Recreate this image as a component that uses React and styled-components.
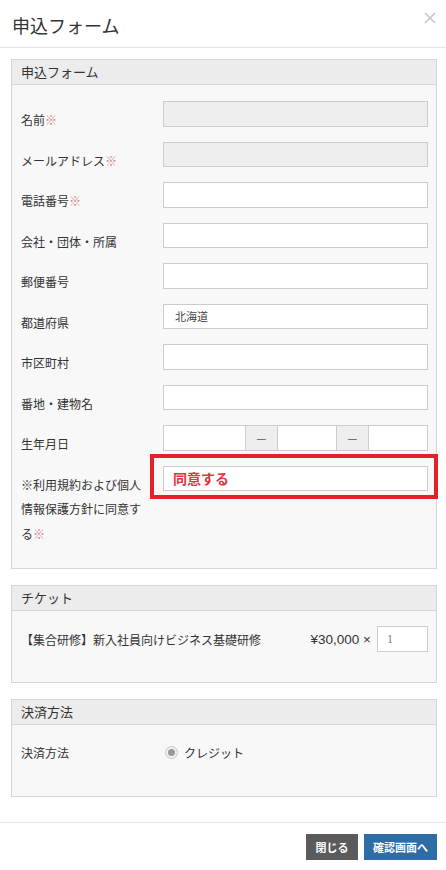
import React from 'react';
import styled, { createGlobalStyle } from 'styled-components';

const GlobalStyle = createGlobalStyle`
  body {
    margin: 0;
    background: #fff;
    font-family: "Noto Sans CJK JP", "Noto Sans", sans-serif;
    color: #333;
  }
`;

const Modal = styled.div`
  width: 446px;
  background: #fff;
`;

const Header = styled.div`
  height: 48px;
  box-sizing: border-box;
  border-bottom: 1px solid #e5e5e5;
  display: flex;
  align-items: center;
  justify-content: space-between;
  padding: 0 10px 0 12px;
`;

const Title = styled.h4`
  margin: 0;
  font-size: 18px;
  font-weight: 400;
  line-height: 1;
  padding-top: 3px;
`;

const Close = styled.button`
  border: 0;
  background: none;
  padding: 0;
  margin-bottom: 12px;
  display: flex;
`;

const Body = styled.div`
  padding: 11px 9px 25px 11px;
  display: flex;
  flex-direction: column;
  gap: 16px;
`;

const Panel = styled.div`
  border: 1px solid #d6d6d6;
  background: #f8f8f8;
`;

const PanelHead = styled.div`
  height: 25px;
  box-sizing: border-box;
  background: #ececec;
  border-bottom: 1px solid #d6d6d6;
  padding: 0 9px;
  font-size: 13px;
  line-height: 24px;
`;

const PanelBody = styled.div`
  padding: ${p => p.$pad || '16px 8px 22px 9px'};
`;

const Row = styled.div`
  display: flex;
  align-items: flex-start;
  margin-bottom: 9px;
  &:last-child { margin-bottom: 0; }
`;

const Label = styled.div`
  width: 142px;
  flex: none;
  box-sizing: border-box;
  padding: 7px ${p => p.$pr || '0'} 0 0;
  font-size: 12px;
  line-height: 24.5px;
`;

const Req = styled.span`
  color: #d08080;
`;

const Field = styled.div`
  flex: 1;
  position: relative;
  display: flex;
`;

const Input = styled.div`
  flex: 1;
  height: 25.5px;
  box-sizing: border-box;
  border: 1px solid #cccccc;
  background: ${p => (p.$disabled ? '#eeeeee' : '#ffffff')};
  font-size: ${p => p.$big ? '14px' : '11px'};
  font-weight: ${p => p.$big ? 700 : 400};
  color: ${p => p.$red ? '#e23340' : '#444'};
  padding: 0 ${p => p.$big ? '9px' : '11px'};
  line-height: 23px;
`;

const Addon = styled.div`
  width: 31px;
  flex: none;
  height: 25.5px;
  box-sizing: border-box;
  border: 1px solid #cccccc;
  border-left: 0;
  border-right: 0;
  background: #eeeeee;
  display: flex;
  align-items: center;
  justify-content: center;
  font-size: 11px;
  color: #555;
`;

const DateInput = styled(Input)`
  flex: none;
  width: ${p => p.$w};
`;

const Highlight = styled.span`
  position: absolute;
  left: -13px;
  right: -10px;
  top: -12px;
  bottom: -8px;
  border: 4px solid #e3212b;
  pointer-events: none;
`;

const TicketRow = styled.div`
  display: flex;
  align-items: center;
  font-size: 12px;
`;

const TicketName = styled.div`
  flex: 1;
  padding-top: 2px;
`;

const Price = styled.div`
  font-family: "Liberation Sans", "Noto Sans CJK JP", sans-serif;
  font-size: 13.5px;
  margin-right: 6px;
  padding-top: 1px;
`;

const Qty = styled.div`
  width: 51px;
  height: 25.5px;
  box-sizing: border-box;
  border: 1px solid #cccccc;
  background: #fff;
  font-family: "Liberation Serif", serif;
  font-size: 12px;
  color: #777;
  padding: 0 9px;
  line-height: 25px;
`;

const RadioWrap = styled.div`
  display: flex;
  align-items: center;
  gap: 6px;
  font-size: 12px;
  padding-top: 7px;
  line-height: 24px;
  margin-left: 2px;
`;

const Radio = styled.span`
  width: 11px;
  height: 11px;
  border-radius: 50%;
  border: 1px solid #c8c8c8;
  background: #f0f0f0;
  display: flex;
  align-items: center;
  justify-content: center;
  &::after {
    content: '';
    width: 7px;
    height: 7px;
    border-radius: 50%;
    background: #999;
  }
`;

const Footer = styled.div`
  border-top: 1px solid #e5e5e5;
  padding: 11px 9px 9px;
  display: flex;
  justify-content: flex-end;
  gap: 6px;
`;

const Button = styled.button`
  height: 26px;
  border: 0;
  padding: 0;
  width: ${p => p.$w};
  background: ${p => p.$bg};
  color: #fff;
  font-family: "Noto Sans CJK JP", sans-serif;
  font-size: 11px;
  font-weight: 700;
`;

const fields = [
  { label: '名前', req: true, disabled: true },
  { label: 'メールアドレス', req: true, disabled: true },
  { label: '電話番号', req: true },
  { label: '会社・団体・所属' },
  { label: '郵便番号' },
  { label: '都道府県', value: '北海道' },
  { label: '市区町村' },
  { label: '番地・建物名' },
];

export default function App() {
  return (
    <Modal>
      <GlobalStyle />
      <Header>
        <Title>申込フォーム</Title>
        <Close aria-label="close">
          <svg width="12" height="12" viewBox="0 0 12 12">
            <path d="M1 1 L11 11 M11 1 L1 11" stroke="#c6c6c6" strokeWidth="1.6" />
          </svg>
        </Close>
      </Header>
      <Body>
        <Panel>
          <PanelHead>申込フォーム</PanelHead>
          <PanelBody>
            {fields.map(f => (
              <Row key={f.label}>
                <Label>{f.label}{f.req && <Req>※</Req>}</Label>
                <Field>
                  <Input $disabled={f.disabled}>{f.value}</Input>
                </Field>
              </Row>
            ))}
            <Row>
              <Label>生年月日</Label>
              <Field>
                <DateInput $w="83px" />
                <Addon>—</Addon>
                <DateInput $w="60px" />
                <Addon>—</Addon>
                <Input />
              </Field>
            </Row>
            <Row>
              <Label $pr="14px">
                ※利用規約および個人情報保護方針に同意する<Req>※</Req>
              </Label>
              <Field>
                <Input $big $red>同意する</Input>
                <Highlight />
              </Field>
            </Row>
          </PanelBody>
        </Panel>

        <Panel>
          <PanelHead>チケット</PanelHead>
          <PanelBody $pad="15px 8px 30px 9px">
            <TicketRow>
              <TicketName>【集合研修】新入社員向けビジネス基礎研修</TicketName>
              <Price>¥30,000 ×</Price>
              <Qty>1</Qty>
            </TicketRow>
          </PanelBody>
        </Panel>

        <Panel>
          <PanelHead>決済方法</PanelHead>
          <PanelBody $pad="9px 8px 31px 9px">
            <Row>
              <Label>決済方法</Label>
              <RadioWrap>
                <Radio />
                クレジット
              </RadioWrap>
            </Row>
          </PanelBody>
        </Panel>
      </Body>
      <Footer>
        <Button $w="52px" $bg="#5b5b5b">閉じる</Button>
        <Button $w="73px" $bg="#2d6ca5">確認画面へ</Button>
      </Footer>
    </Modal>
  );
}
